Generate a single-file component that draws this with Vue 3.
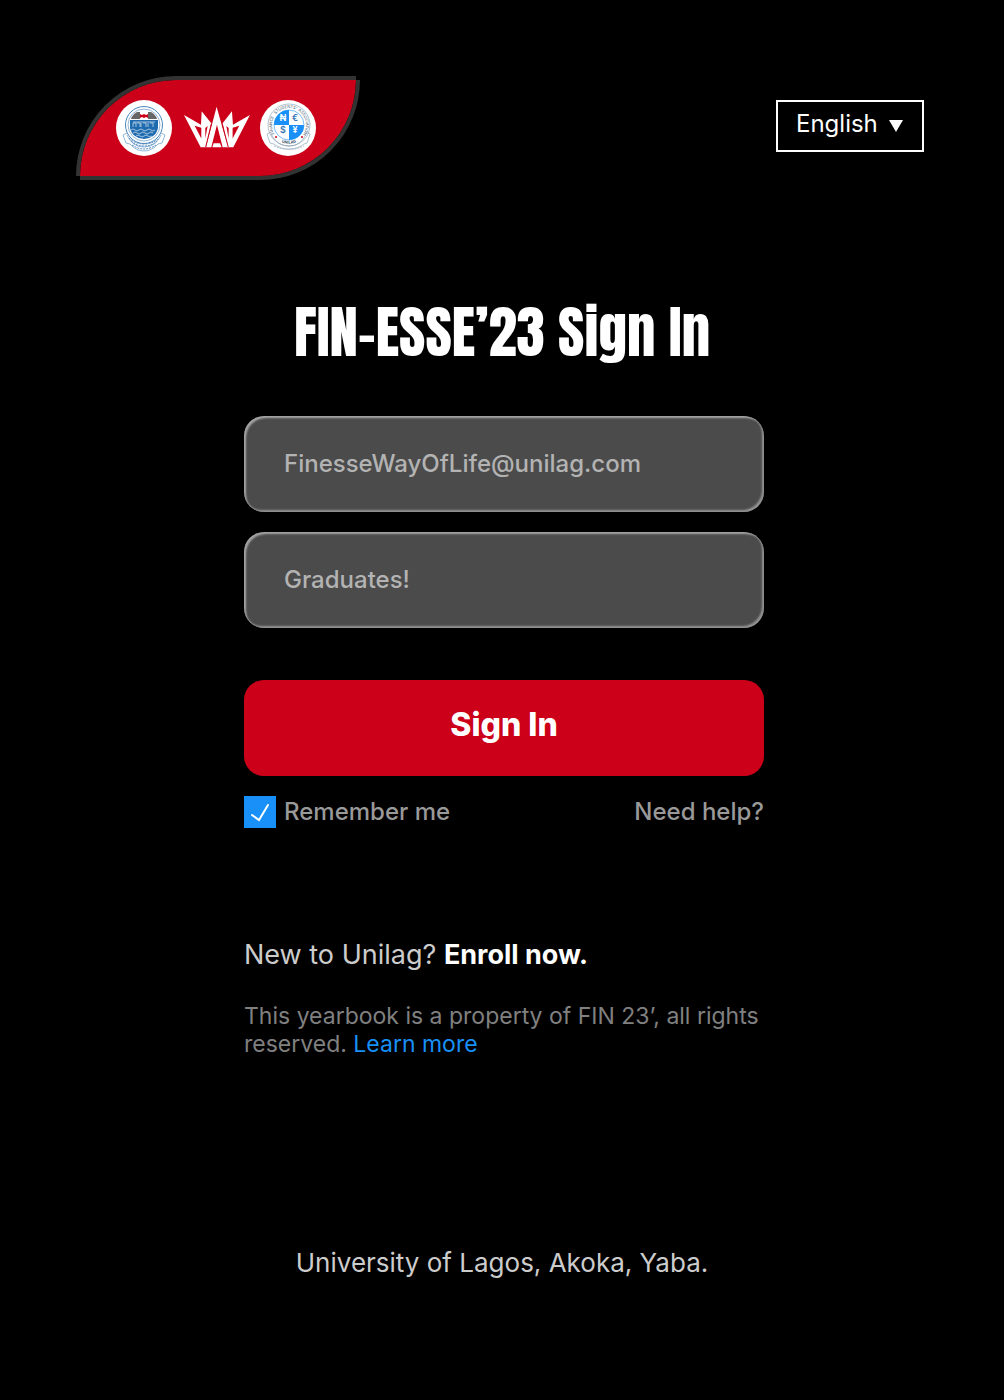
<template>
  <div class="page">
    <header class="header">
      <svg class="brand" viewBox="0 0 284 104" role="img" aria-label="FIN Unilag">
        <path class="brand-fill" d="M4 100A96 96 0 0 1 100 4H280A96 96 0 0 1 184 100Z" />
        <path class="brand-edge" d="M2 100A98 98 0 0 1 100 2H280" />
        <path class="brand-edge" d="M282 4A98 98 0 0 1 184 102H4" />

        <!-- university crest -->
        <g transform="translate(40 24)">
          <circle cx="28" cy="28" r="28" fill="#fff" />
          <circle cx="28" cy="25" r="18.500" class="crest-ring" />
          <circle cx="28" cy="25" r="16" class="crest-ring thin" />
          <path d="M15 19q1-4 6-7h3v7zM41 19q-1-4-6-7h-3v7z" fill="#666" />
          <path d="M24 14l2 1 2-1 2 1 2-1v4l-2-1-2 1-2-1-2 1z" fill="#cf001a" />
          <path d="M14 20h28v8q-1 5-5 8-4 3-9 3t-9-3q-4-3-5-8z" fill="#1f6bb0" />
          <path d="M17 27v-4h3v4m1-4h3v4m1-4v4m2-4h3v4m2-4v4m2-4h3v4M17 22h22" class="crest-mark" />
          <path d="M15 30q2-2 4 0t4 0 4 0 4 0 4 0 4 0M17 33q2-2 4 0t4 0 4 0 4 0 4 0M20 36q2-2 4 0t4 0 4 0 4 0" class="crest-mark" />
          <path d="M13 38q6 6 15 6t15-6M15 41q5 5 13 5t13-5" class="crest-ring dots" />
          <path d="M11 33L7 35L10 43L14 44Q20 51 28 51T42 44L46 43L49 35L45 33M11 35Q16 47 28 47T45 35" class="crest-ring thin" />
          <path d="M16 45Q28 53 40 45" class="crest-ring dots" />
        </g>

        <!-- crown -->
        <g transform="translate(104 18) scale(0.333)">
          <path d="M12 63L63 92L65 52L94 88L78 160H62Z" fill="#fff" />
          <path d="M210 63L159 92L156 52L128 88L142 160H160Z" fill="#fff" />
          <path d="M44 95L64 101V134ZM178 95L158 101V134ZM76 102L83 96L76 134ZM146 102L139 96L146 134Z" fill="#cc0019" />
          <path d="M110 38L144 160H128L111 92L94 160H78Z" fill="#fff" />
          <path d="M94 90L77 160M127 90L145 160" stroke="#cc0019" stroke-width="3" />
          <path d="M101 148H120L125 160H97Z" fill="#fff" />
        </g>

        <!-- association seal -->
        <g transform="translate(184 24)">
          <circle cx="28" cy="28" r="28" fill="#fff" />
          <circle cx="29" cy="25" r="21" class="seal-ring" />
          <path d="M29 25V10A15 15 0 0 0 14 25ZM29 25H44A15 15 0 0 1 29 40Z" fill="#1890f7" />
          <circle cx="29" cy="25" r="15" class="seal-ring blue" />
          <text x="23" y="21" class="coin light">₦</text>
          <text x="35" y="21" class="coin">€</text>
          <text x="23" y="33" class="coin">$</text>
          <text x="35" y="33" class="coin light">¥</text>
          <path id="seal-top" d="M16 36A17 17 0 1 1 42 36" fill="none" />
          <path id="seal-bottom" d="M16 39A20 20 0 0 0 42 39" fill="none" />
          <text class="seal-text"><textPath href="#seal-top" startOffset="15%">FINANCE</textPath></text>
          <text class="seal-text"><textPath href="#seal-top" startOffset="45%">STUDENTS'</textPath></text>
          <text class="seal-text"><textPath href="#seal-top" startOffset="80%">ASSOCIATION</textPath></text>
          <text class="seal-text unilag"><textPath href="#seal-bottom" startOffset="50%">UNILAG</textPath></text>
          <circle cx="16" cy="37" r="1" fill="#cf001a" />
          <circle cx="42" cy="37" r="1" fill="#cf001a" />
          <path d="M11 32L7 34L10 43L14 44Q20 49 29 49T44 44L47 43L50 34L46 32M11 34Q17 46 29 46T46 34" class="seal-ring" />
          <path d="M14 46Q29 53 44 46" class="seal-ring dots" />
        </g>
      </svg>

      <div class="language">
        <select v-model="language" class="language-select" aria-label="Language">
          <option>English</option>
        </select>
        <svg class="language-arrow" viewBox="0 0 14 12" aria-hidden="true">
          <path d="M0 0H14L7 12Z" fill="#fff" />
        </svg>
      </div>
    </header>

    <main>
      <h1 class="title">FIN-ESSE’23 Sign In</h1>

      <div class="panel">
        <form @submit.prevent>
          <input v-model="email" class="field" type="email" placeholder="FinesseWayOfLife@unilag.com" aria-label="Email">
          <input v-model="password" class="field" type="password" placeholder="Graduates!" aria-label="Password">
          <button class="submit" type="submit">Sign In</button>

          <div class="options">
            <label class="remember" for="remember">
              <span class="check">
                <input id="remember" v-model="remember" type="checkbox">
                <svg v-if="remember" viewBox="0 0 32 32" aria-hidden="true">
                  <path d="M8 19L15 24L24 9" />
                </svg>
              </span>
              Remember me
            </label>
            <a class="help" href="#">Need help?</a>
          </div>
        </form>

        <p class="enroll">New to Unilag? <a href="#">Enroll now.</a></p>
        <p class="notice">This yearbook is a property of FIN 23’, all rights reserved. <a href="#">Learn more</a></p>
      </div>
    </main>

    <footer class="footer">University of Lagos, Akoka, Yaba.</footer>
  </div>
</template>

<script setup>
import { ref } from 'vue';

const language = ref('English');
const email = ref('');
const password = ref('');
const remember = ref(true);
</script>

<style>
body {
  margin: 0;
  background: #000;
}
</style>

<style scoped>
.page {
  box-sizing: border-box;
  min-height: 100vh;
  background: #000;
  color: #fff;
  font-family: Inter, "Liberation Sans", sans-serif;
}

a {
  text-decoration: none;
}

.header {
  display: flex;
  justify-content: space-between;
  align-items: flex-start;
  padding: 76px 80px 0 76px;
}

.brand {
  width: 284px;
  height: 104px;
}

.brand-fill {
  fill: #cc0019;
}

.brand-edge {
  fill: none;
  stroke: #333;
  stroke-width: 4;
}

.crest-ring {
  fill: none;
  stroke: #4a86bd;
  stroke-width: 1;
}

.crest-ring.thin {
  stroke-width: 0.6;
}

.dots {
  stroke-dasharray: 2 1;
}

.crest-mark {
  fill: none;
  stroke: #c5d9ea;
  stroke-width: 0.8;
}

.seal-ring {
  fill: none;
  stroke: #7f98b0;
  stroke-width: 0.6;
}

.seal-ring.blue {
  stroke: #1890f7;
}

.coin {
  fill: #3578b5;
  font-size: 9px;
  font-weight: 600;
  text-anchor: middle;
}

.coin.light {
  fill: #fff;
}

.seal-text {
  fill: #41576e;
  font-size: 4px;
  text-anchor: middle;
}

.seal-text.unilag {
  font-weight: 700;
}

.language {
  position: relative;
  margin-top: 24px;
}

.language-select {
  appearance: none;
  box-sizing: border-box;
  width: 148px;
  height: 52px;
  padding: 0 40px 6px 18px;
  border: 2px solid #fff;
  border-radius: 0;
  background: #000;
  color: #fff;
  font-family: inherit;
  font-size: 24px;
}

.language-arrow {
  position: absolute;
  top: 20px;
  right: 21px;
  width: 14px;
  height: 12px;
  pointer-events: none;
}

.title {
  margin: 112px 0 0;
  font-family: Anton, "Liberation Sans Narrow", sans-serif;
  font-size: 57px;
  font-weight: 400;
  line-height: 80px;
  text-align: center;
}

.panel {
  box-sizing: border-box;
  width: 100%;
  max-width: 524px;
  margin: 44px auto 0;
  padding-left: 4px;
}

.field {
  display: block;
  box-sizing: border-box;
  width: 100%;
  height: 96px;
  margin-bottom: 20px;
  padding: 0 40px 2px;
  border: 0;
  border-radius: 20px;
  background: #4b4b4b;
  box-shadow: inset 2px 2px 2px rgba(255, 255, 255, 0.5), inset -2px -2px 2px rgba(255, 255, 255, 0.4);
  color: #fff;
  font-family: inherit;
  font-size: 24px;
  font-weight: 500;
}

.field::placeholder {
  color: #b3b3b3;
  opacity: 1;
}

.submit {
  display: block;
  width: 100%;
  height: 96px;
  margin-top: 52px;
  padding: 0 0 8px;
  border: 0;
  border-radius: 20px;
  background: #cc0019;
  color: #fff;
  font-family: inherit;
  font-size: 32px;
  font-weight: 800;
}

.options {
  display: flex;
  justify-content: space-between;
  margin-top: 20px;
  color: #999;
  font-size: 24px;
  font-weight: 500;
  line-height: 32px;
}

.remember {
  display: flex;
  gap: 8px;
}

.check {
  position: relative;
  width: 32px;
  height: 32px;
}

.check input {
  appearance: none;
  display: block;
  width: 32px;
  height: 32px;
  margin: 0;
  background: #1890f7;
}

.check svg {
  position: absolute;
  inset: 0;
  fill: none;
  stroke: #fff;
  stroke-width: 2;
  stroke-linecap: round;
  pointer-events: none;
}

.help {
  color: #999;
}

.enroll {
  margin: 109px 0 0;
  color: #ccc;
  font-size: 27px;
  line-height: 36px;
}

.enroll a {
  color: #fff;
  font-weight: 700;
}

.notice {
  margin: 29px 0 0;
  color: #808080;
  font-size: 23px;
  line-height: 28px;
}

.notice a {
  color: #1890f7;
}

.footer {
  margin-top: 189px;
  padding-bottom: 120px;
  color: #ccc;
  font-size: 26px;
  line-height: 32px;
  text-align: center;
}
</style>
